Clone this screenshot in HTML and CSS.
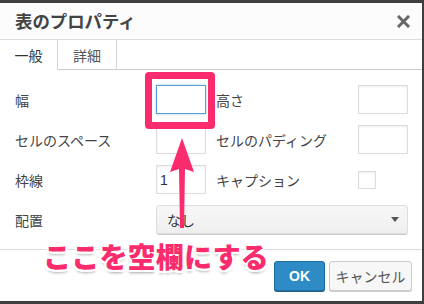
FILE: index.html
```html
<!DOCTYPE html>
<html lang="ja">
<head>
<meta charset="utf-8">
<link rel="stylesheet" href="styles.css">
</head>
<body>
<div class="dialog">
  <div class="header">
    <div class="title">表のプロパティ</div>
    <svg class="close" width="13" height="13" viewBox="0 0 13 13"><path d="M2 2L11 11M11 2L2 11" stroke="#666" stroke-width="3" stroke-linecap="square"/></svg>
  </div>
  <div class="tabs">
    <div class="tab active">一般</div>
    <div class="tab">詳細</div>
    <div class="tab-fill"></div>
  </div>
  <div class="form">
    <div class="label">幅</div>
    <div class="input focus"></div>
    <div class="label right">高さ</div>
    <div class="input"></div>

    <div class="label">セルのスペース</div>
    <div class="input"></div>
    <div class="label right">セルのパディング</div>
    <div class="input"></div>

    <div class="label">枠線</div>
    <div class="input">1</div>
    <div class="label right">キャプション</div>
    <div class="check-cell"><div class="checkbox"></div></div>

    <div class="label">配置</div>
    <div class="select"><span>なし</span><span class="caret"></span></div>
  </div>
  <div class="footer">
    <div class="btn primary">OK</div>
    <div class="btn cancel">キャンセル</div>
  </div>

  <div class="hl-box"></div>
  <svg class="arrow" width="40" height="110" viewBox="0 0 40 110">
    <path d="M20 2 L32 36 L23 33 L22 92 L18 92 L17 33 L8 36 Z" fill="#fb2c6e"/>
  </svg>
  <div class="note">ここを空欄にする</div>
</div>
</body>
</html>
```
FILE: styles.css
```css
* { box-sizing: border-box; }
html, body { margin: 0; padding: 0; }
body {
  background: #3f3f3f;
  width: 424px;
  height: 304px;
  overflow: hidden;
  padding: 3px 2px 3px 0;
  font-family: "Noto Sans CJK JP", "Noto Sans", sans-serif;
  color: #444;
}
.dialog {
  position: relative;
  width: 422px;
  height: 298px;
  background: #fff;
  display: flex;
  flex-direction: column;
}
.header {
  height: 37px;
  background: #fcfcfc;
  border-bottom: 1px solid #dcdcdc;
  display: flex;
  align-items: center;
  justify-content: space-between;
  padding: 0 12px 0 15px;
}
.title {
  font-size: 17.4px;
  font-weight: bold;
  color: #444;
  line-height: 1;
}
.close { display: block; margin-top: 1px; }
.tabs {
  height: 30px;
  display: flex;
}
.tab {
  width: 59px;
  height: 30px;
  display: flex;
  align-items: center;
  justify-content: center;
  font-size: 14px;
  color: #555;
  border-right: 1px solid #d6d6d6;
  border-bottom: 1px solid #ccc;
  background: #fff;
}
.tab.active {
  width: 58px;
  border-bottom-color: #fff;
  color: #333;
}
.tab-fill {
  flex: 1;
  border-bottom: 1px solid #ccc;
}
.form {
  display: grid;
  grid-template-columns: 141px 50px 152px 50px;
  grid-auto-rows: 29px;
  row-gap: 11px;
  padding: 15px 0 0 15px;
  height: 179px;
}
.label {
  font-size: 14px;
  color: #444;
  display: flex;
  align-items: center;
  white-space: nowrap;
}
.label.right { padding-left: 10px; }
.input {
  border: 1px solid #ddd;
  box-shadow: inset 0 1px 2px rgba(0,0,0,0.07);
  background: #fff;
  font-family: "Liberation Sans", sans-serif;
  font-size: 14px;
  color: #333;
  padding-left: 3px;
  display: flex;
  align-items: center;
}
.input.focus { border-color: #5b9dd9; box-shadow: 0 0 2px rgba(30,140,190,0.5); }
.check-cell { display: flex; align-items: center; }
.checkbox {
  width: 18px;
  height: 18px;
  border: 1px solid #ddd;
  box-shadow: inset 0 1px 2px rgba(0,0,0,0.07);
}
.select {
  grid-column: 2 / 5;
  border: 1px solid #ddd;
  border-radius: 3px;
  background: linear-gradient(#f7f7f7, #efefef);
  box-shadow: 0 1px 0 #ccc;
  display: flex;
  align-items: center;
  justify-content: space-between;
  padding: 0 8px 0 10px;
  font-size: 14px;
  color: #333;
}
.caret {
  width: 0; height: 0;
  border-left: 4px solid transparent;
  border-right: 4px solid transparent;
  border-top: 5px solid #555;
}
.footer {
  flex: 1;
  border-top: 1px solid #ddd;
  display: flex;
  justify-content: flex-end;
  align-items: flex-start;
  gap: 4px;
  padding: 11px 10px 0 0;
}
.btn {
  height: 30px;
  border: 1px solid #ccc;
  border-radius: 3px;
  background: #f7f7f7;
  box-shadow: 0 1px 0 #ccc;
  font-size: 14px;
  color: #555;
  display: flex;
  align-items: center;
  justify-content: center;
}
.btn.cancel { width: 83px; }
.btn.primary {
  width: 51px;
  background: #2e8bc6;
  border-color: #1f6ea1;
  box-shadow: 0 1px 0 #1b5e8a;
  color: #fff;
  font-family: "Liberation Sans", sans-serif;
  font-weight: bold;
  font-size: 14px;
}
.hl-box {
  position: absolute;
  left: 145px;
  top: 69px;
  width: 70px;
  height: 57px;
  border: 7px solid #fb2c6e;
  border-radius: 4px;
}
.arrow {
  position: absolute;
  left: 162px;
  top: 133px;
}
.note {
  position: absolute;
  left: 43px;
  top: 236px;
  font-size: 28.2px;
  font-weight: 900;
  color: #fb2c6e;
  line-height: 1.2;
  white-space: nowrap;
  text-shadow:
    2px 0 0 #fff, -2px 0 0 #fff, 0 2px 0 #fff, 0 -2px 0 #fff,
    2px 2px 0 #fff, -2px -2px 0 #fff, 2px -2px 0 #fff, -2px 2px 0 #fff,
    0 3px 3px rgba(0,0,0,0.35);
}
```
